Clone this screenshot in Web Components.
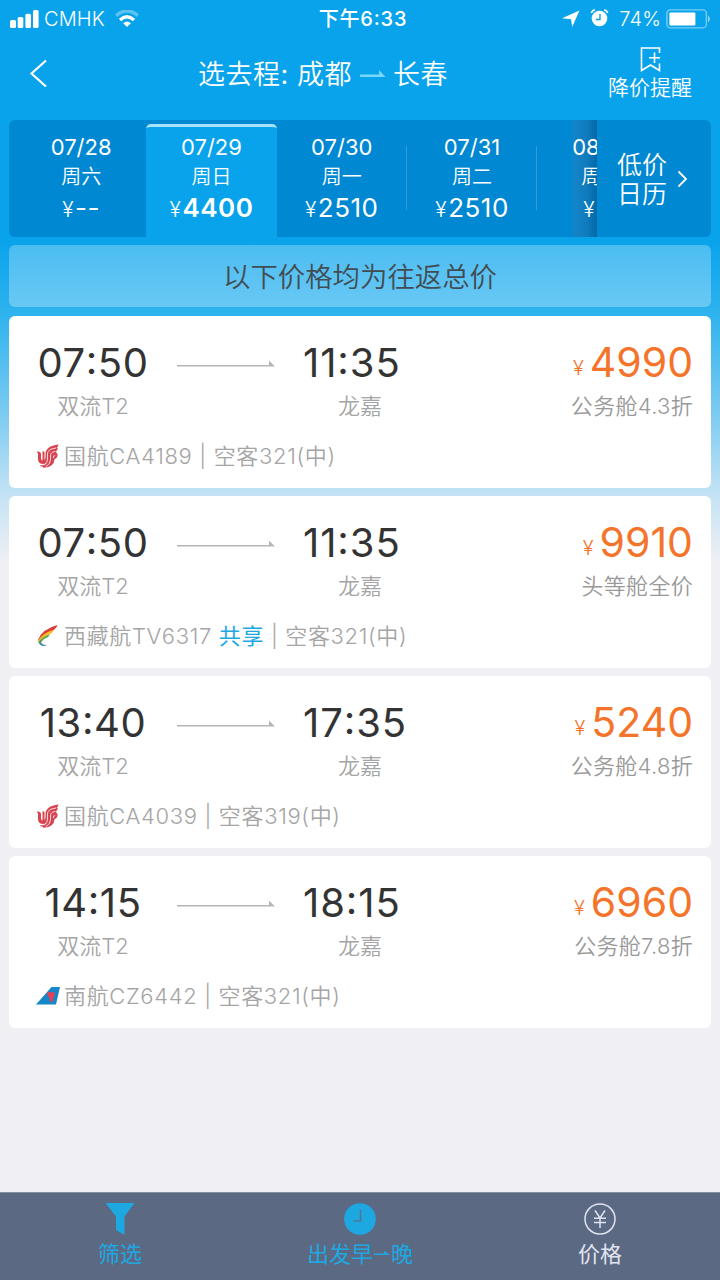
<!DOCTYPE html>
<html lang="zh-CN">
<head>
  <meta charset="UTF-8">
  <meta name="viewport" content="width=device-width, initial-scale=1.0">
  <title>选去程</title>
  <style>
    body {
      --blue: #08a3eb;
      --deep-blue: #0188d2;
      --accent: #1ea8e2;
      --orange: #f5742b;
      --page: #efeff4;
      --strong-font: Inter, 'Noto Sans CJK SC', sans-serif;
      margin: 0;
      width: 720px;
      height: 1280px;
      overflow: hidden;
      font-family: Inter, 'Noto Sans CJK SC DemiLight', 'Noto Sans CJK SC', sans-serif;
      background: linear-gradient(var(--blue) 240px, #2db3ee 312px, #75c8f1 405px, #c2e2f4 492px, var(--page) 562px);
      display: flex;
      flex-direction: column;
    }
    main {
      flex: 1;
      display: flex;
      flex-direction: column;
      gap: 8px;
      padding: 0 9px;
    }
  </style>
</head>
<body>
  <status-bar carrier="CMHK" time="下午6:33" battery="74%"></status-bar>
  <nav-header from="成都" to="长春">选去程:</nav-header>

  <main>
    <date-strip>
      <date-tab date="07/28" day="周六" price="--"></date-tab>
      <date-tab date="07/29" day="周日" price="4400" selected></date-tab>
      <date-tab date="07/30" day="周一" price="2510" divider></date-tab>
      <date-tab date="07/31" day="周二" price="2510" divider></date-tab>
      <date-tab date="08" day="周" price="" cut></date-tab>
    </date-strip>
    <price-notice>以下价格均为往返总价</price-notice>
    <flight-card depart="07:50" arrive="11:35" from="双流T2" to="龙嘉" price="4990" cabin="公务舱4.3折" logo="ca">国航CA4189 | 空客321(中)</flight-card>
    <flight-card depart="07:50" arrive="11:35" from="双流T2" to="龙嘉" price="9910" cabin="头等舱全价" logo="tv">西藏航TV6317 <b>共享</b> | 空客321(中)</flight-card>
    <flight-card depart="13:40" arrive="17:35" from="双流T2" to="龙嘉" price="5240" cabin="公务舱4.8折" logo="ca">国航CA4039 | 空客319(中)</flight-card>
    <flight-card depart="14:15" arrive="18:15" from="双流T2" to="龙嘉" price="6960" cabin="公务舱7.8折" logo="cz">南航CZ6442 | 空客321(中)</flight-card>
  </main>

  <tool-bar></tool-bar>

  <script>
    // lift the colon to the middle of the digits
    const clock = time => time.replace(':', '<span class="colon">:</span>');

    customElements.define('status-bar', class extends HTMLElement {
      constructor() {
        super();
        this.attachShadow({ mode: 'open' });
        this.shadowRoot.innerHTML = `
          <style>
            :host {
              display: grid;
              grid-template-columns: 1fr auto 1fr;
              align-items: center;
              height: 36px;
              padding: 0 10px 0 10px;
              color: white;
              font-size: 20px;
              line-height: 36px;
            }
            div {
              display: flex;
              align-items: center;
            }
            .right {
              justify-content: flex-end;
            }
            .carrier {
              margin: 0 10px 0 5px;
              font-weight: 300;
              letter-spacing: .1px;
            }
            .time {
              font-family: var(--strong-font);
              font-weight: 500;
              letter-spacing: .8px;
              padding: 1px 0 0 6px;
            }
            .colon {
              line-height: 1;
              vertical-align: 1.5px;
            }
            .battery {
              font-weight: 300;
              margin: 0 5px 0 10px;
              letter-spacing: .1px;
            }
          </style>
          <div>
            <svg width="29" height="18" viewBox="0 0 29 18" fill="#fff">
              <rect x="0" y="10" width="6" height="8" rx="1.5"/>
              <rect x="7.7" y="7" width="5.6" height="11" rx="1.5"/>
              <rect x="15.4" y="3.7" width="5.6" height="14.3" rx="1.5"/>
              <rect x="23" y="0" width="5.6" height="18" rx="1.5"/>
            </svg>
            <span class="carrier">${this.getAttribute('carrier')}</span>
            <svg width="24" height="18" viewBox="0 0 24 18" fill="none" stroke="#fff" stroke-width="3.4">
              <path d="M1.2 5.6Q12-3.8 22.8 5.6" opacity=".35"/>
              <path d="M5 10Q12 3.6 19 10"/>
              <path d="M8.2 13.2Q12 10 15.8 13.2L12 17Z" fill="#fff" stroke="none"/>
            </svg>
          </div>
          <span class="time">${clock(this.getAttribute('time'))}</span>
          <div class="right">
            <svg width="18" height="18" viewBox="0 0 18 18"><path d="M17.500 .5L10.200 17L9 9.200L0 8.200Z" fill="#fff"/></svg>
            <svg width="19" height="19" viewBox="0 0 19 19" style="margin-left:10px">
              <circle cx="9.5" cy="9.5" r="7.8" fill="#fff"/>
              <path d="M1.3 4Q2.2 1.3 4.8 .8M17.7 4Q16.8 1.3 14.2 .8" stroke="#fff" stroke-width="1.7" fill="none"/>
              <path d="M10 5V10.5H5.7" stroke="#08a3eb" stroke-width="1.4" fill="none"/>
            </svg>
            <span class="battery">${this.getAttribute('battery')}</span>
            <svg width="44" height="20" viewBox="0 0 44 20">
              <rect x=".9" y=".9" width="39.5" height="18" rx="3.5" fill="none" stroke="#fff" stroke-opacity=".45" stroke-width="1.4"/>
              <rect x="3.4" y="3.4" width="26" height="13" rx="1" fill="#fff"/>
              <path d="M42 6.5Q44 7.5 44 10T42 13.4Z" fill="#fff" opacity=".5"/>
            </svg>
          </div>
        `;
      }
    });

    customElements.define('nav-header', class extends HTMLElement {
      constructor() {
        super();
        this.attachShadow({ mode: 'open' });
        this.shadowRoot.innerHTML = `
          <style>
            :host {
              display: grid;
              grid-template-columns: 80px 1fr 160px;
              height: 84px;
              padding: 0 0 0 6px;
              box-sizing: border-box;
              color: white;
            }
            .back {
              padding: 23px 0 0 23px;
            }
            h1 {
              margin: 0;
              display: flex;
              justify-content: center;
              font-size: 27px;
              font-weight: 400;
              line-height: 77px;
              letter-spacing: .5px;
              white-space: nowrap;
            }
            h1 svg {
              margin: 33px 7px 0 8px;
            }
            .alert {
              display: flex;
              flex-direction: column;
              align-items: center;
              padding: 11px 0 0 20px;
              font-size: 21px;
              line-height: 31px;
            }
          </style>
          <div class="back">
            <svg width="18" height="28" viewBox="0 0 18 28" fill="none" stroke="#fff" stroke-width="2.2"><path d="M17 1.5L2.5 14.5L17 27.5"/></svg>
          </div>
          <h1>
            <slot></slot>&nbsp;${this.getAttribute('from')}
            <svg width="26" height="10" viewBox="0 0 26 10" fill="#7bd6fb"><path d="M0 5.5H19V1L25.5 8H0Z"/></svg>
            ${this.getAttribute('to')}
          </h1>
          <div class="alert">
            <svg width="21" height="25" viewBox="0 0 21 25" fill="none" stroke="#fff" stroke-width="1.6">
              <path d="M19.5 6V1H1.5V23.5L10.5 18L19.5 23.5V16.5M14.5 5.5V16M9 10.8H20"/>
            </svg>
            <span>降价提醒</span>
          </div>
        `;
      }
    });

    customElements.define('date-strip', class extends HTMLElement {
      constructor() {
        super();
        this.attachShadow({ mode: 'open' });
        this.shadowRoot.innerHTML = `
          <style>
            :host {
              display: flex;
              height: 117px;
              border-radius: 6px;
              overflow: hidden;
              background: var(--deep-blue);
              color: white;
            }
            .days {
              width: 588px;
              padding-left: 7px;
              box-sizing: border-box;
              display: flex;
              overflow: hidden;
              background: linear-gradient(90deg, transparent 562px, #1484c8 566px, #0f7bbd 578px, #0069a8 588px);
            }
            .calendar {
              flex: 1;
              display: flex;
              align-items: center;
              gap: 10px;
              padding-left: 20px;
              font-size: 25px;
              line-height: 29px;
            }
            .calendar span {
              padding-top: 2px;
            }
          </style>
          <div class="days"><slot></slot></div>
          <div class="calendar">
            <span>低价<br>日历</span>
            <svg width="11" height="18" viewBox="0 0 11 18" fill="none" stroke="#fff" stroke-width="1.8"><path d="M1.5 1.5L9 9L1.5 16.5"/></svg>
          </div>
        `;
      }
    });

    customElements.define('date-tab', class extends HTMLElement {
      constructor() {
        super();
        this.attachShadow({ mode: 'open' });
        this.shadowRoot.innerHTML = `
          <style>
            :host {
              flex: 0 0 130.3px;
              display: flex;
              flex-direction: column;
              align-items: center;
              box-sizing: border-box;
              padding-top: 13px;
              font-size: 22px;
              line-height: 29px;
              white-space: nowrap;
            }
            :host([selected]) {
              background: var(--blue);
              border-top: 3px solid #a5e3fb;
              border-radius: 5px 5px 0 0;
              margin-top: 4px;
              padding-top: 6px;
            }
            :host([divider]) {
              background: linear-gradient(#2c9edb, #2c9edb) right 26px / 1px 64px no-repeat;
            }
            :host([cut]) {
              align-items: flex-start;
              padding-left: 35px;
            }
            .day {
              font-size: 20px;
              line-height: 30px;
            }
            .price {
              font-size: 26px;
              line-height: 32px;
              letter-spacing: .5px;
            }
            .price i {
              font-style: normal;
              font-weight: 350;
              font-size: 21px;
              letter-spacing: 1.5px;
            }
            :host([selected]) .price {
              font-weight: 600;
            }
            :host([cut]) .day {
              padding-left: 9px;
            }
            :host([cut]) .price {
              padding-left: 11px;
            }
          </style>
          <span class="date">${this.getAttribute('date')}</span>
          <span class="day">${this.getAttribute('day')}</span>
          <span class="price"><i>¥</i>${this.getAttribute('price')}</span>
        `;
      }
    });

    customElements.define('price-notice', class extends HTMLElement {
      constructor() {
        super();
        this.attachShadow({ mode: 'open' });
        this.shadowRoot.innerHTML = `
          <style>
            :host {
              display: block;
              height: 62px;
              margin-bottom: 1px;
              border-radius: 6px;
              background: linear-gradient(#4bbdf1, #69c8f4);
              color: #424c53;
              font-size: 27.4px;
              line-height: 64px;
              text-align: center;
            }
          </style>
          <slot></slot>
        `;
      }
    });

    const logos = {
      ca: `
        <path d="M.5 7.5Q5 7 5 10.500V14.500Q5 16.500 6.500 16.500V7.500H8.500V16Q9.500 15.500 9.500 13V10Q9.500 2 22.500 .5Q22 3 20.500 4Q22 4 22 4.500Q21 7 19 7.500Q20.500 7.500 20.300 8.500Q22 9.500 21.500 12Q21 14.500 18.500 15.300Q18 23.500 8 23.800Q7 23.800 6.500 22.800Q4.500 22.500 4 21.300Q9 21.500 10.500 18.500Q9 20 6.500 20Q2 19.500 2 15V10Q2 8.800 .5 7.500Z" fill="#d8444f"/>
        <path d="M20 4Q11.500 5 11.500 10V15Q11.500 19 8 21.500M19 7.500Q14.500 8 14.500 12V16Q14 20.500 10 22.500M19 11.500Q17.200 11.500 17.300 14" fill="none" stroke="#fff" stroke-width=".8"/>`,
      tv: `
        <path d="M2 16Q6 5 21.5 1Q20 6 13 8.5Q6 11 2.5 17Z" fill="#dc3b34"/>
        <path d="M2 17Q7 8.5 18 5.8Q16 10 10.5 12Q5 14 2.5 19Z" fill="#f5bd28"/>
        <path d="M2.3 18.5Q6 12.5 14 10.5Q13 13 9 14.5Q5 16.5 4.5 21Z" fill="#4faa49"/>
        <path d="M4.5 17Q5 21 11 21Q7 23 4.5 21Q2.5 19 4.5 17Z" fill="#4289b5"/>`,
      cz: `
        <path d="M0 20.5L15.5 3H24L20 20.5Z" fill="#1587c9"/>
        <path d="M11 9Q13 7 15 8.5Q18 7 19 10Q18 13 17 14V17.5H13.5V14Q11 12 11 9Z" fill="#e0405a"/>`
    };

    customElements.define('flight-card', class extends HTMLElement {
      constructor() {
        super();
        this.attachShadow({ mode: 'open' });
        this.shadowRoot.innerHTML = `
          <style>
            :host {
              display: grid;
              grid-template-columns: 128px 98px 162px 1fr;
              grid-template-rows: 44px 28px 28px;
              row-gap: 8px;
              box-sizing: border-box;
              height: 172px;
              padding: 24px 18px 0 20px;
              border-radius: 6px;
              background: white;
              color: #a5a5a5;
              font-size: 22px;
              font-weight: 350;
              line-height: 28px;
              white-space: nowrap;
            }
            .time {
              color: #333;
              font-size: 40px;
              font-weight: 400;
              line-height: 46px;
              letter-spacing: .6px;
            }
            .colon {
              line-height: 1;
              vertical-align: 3px;
            }
            .arrive {
              letter-spacing: .9px;
            }
            .center {
              text-align: center;
            }
            .arrow {
              padding: 19px 0 0 20px;
            }
            .arrive, .to {
              margin-left: 48px;
            }
            .price, .cabin {
              grid-column: 4;
              text-align: right;
            }
            .price {
              color: var(--orange);
              font-size: 41px;
              font-weight: 400;
              line-height: 45px;
            }
            .price i {
              font-style: normal;
              font-size: 20px;
              font-weight: 350;
              margin-right: 6px;
              vertical-align: 2px;
            }
            .cabin {
              color: #999;
              letter-spacing: .3px;
            }
            .from, .to, .cabin {
              grid-row: 2;
            }
            .to {
              grid-column: 3;
            }
            .flight {
              grid-column: 1 / -1;
              display: flex;
              gap: 4px;
              padding: 14px 0 0 7px;
              letter-spacing: .65px;
            }
            .flight svg {
              margin-top: 2px;
            }
            ::slotted(b) {
              font-family: var(--strong-font);
              font-weight: 400;
              color: var(--accent);
            }
          </style>
          <span class="time center">${clock(this.getAttribute('depart'))}</span>
          <span class="arrow"><svg width="98" height="10" viewBox="0 0 98 10" fill="#b5b5b5" style="display:block"><path d="M0 6H92V1.5L98 7.4H0Z"/></svg></span>
          <span class="time arrive">${clock(this.getAttribute('arrive'))}</span>
          <span class="price"><i>¥</i>${this.getAttribute('price')}</span>
          <span class="from center">${this.getAttribute('from')}</span>
          <span class="to center">${this.getAttribute('to')}</span>
          <span class="cabin">${this.getAttribute('cabin')}</span>
          <div class="flight">
            <svg width="24" height="24" viewBox="0 0 24 24">${logos[this.getAttribute('logo')]}</svg>
            <span><slot></slot></span>
          </div>
        `;
      }
    });

    customElements.define('tool-bar', class extends HTMLElement {
      constructor() {
        super();
        this.attachShadow({ mode: 'open' });
        this.shadowRoot.innerHTML = `
          <style>
            :host {
              display: grid;
              grid-template-columns: repeat(3, 1fr);
              box-sizing: border-box;
              height: 88px;
              border-top: 1px solid #8890a4;
              background: #5b6982;
              color: var(--accent);
              font-family: var(--strong-font);
              font-size: 22px;
              line-height: 30px;
            }
            div {
              display: flex;
              flex-direction: column;
              align-items: center;
              gap: 3px;
              padding-top: 9px;
            }
            .off {
              color: #e0e4f0;
            }
            .label {
              display: flex;
              align-items: center;
            }
          </style>
          <div>
            <svg width="32" height="34" viewBox="0 0 32 34" fill="#1ea8e2"><path d="M1.5 1H30.5L20.5 14.5V33L12 28V14.5Z"/></svg>
            <span class="label">筛选</span>
          </div>
          <div>
            <svg width="34" height="34" viewBox="0 0 34 34">
              <circle cx="17" cy="17" r="15.8" fill="#1ea8e2"/>
              <path d="M17.5 7.5V19H10.5" fill="none" stroke="#4c7896" stroke-width="1.6"/>
            </svg>
            <span class="label">出发早<svg width="18" height="8" viewBox="0 0 18 8" fill="#1ea8e2"><path d="M1 3.5H11V1L17 5H1Z"/></svg>晚</span>
          </div>
          <div class="off">
            <svg width="34" height="34" viewBox="0 0 34 34" fill="none" stroke="#e0e4f0" stroke-width="1.5">
              <circle cx="17" cy="17" r="15"/>
              <path d="M12 8.5L17 16L22 8.5M17 16V26M11 16.3H23M11 20.5H23"/>
            </svg>
            <span class="label">价格</span>
          </div>
        `;
      }
    });
  </script>
</body>
</html>
